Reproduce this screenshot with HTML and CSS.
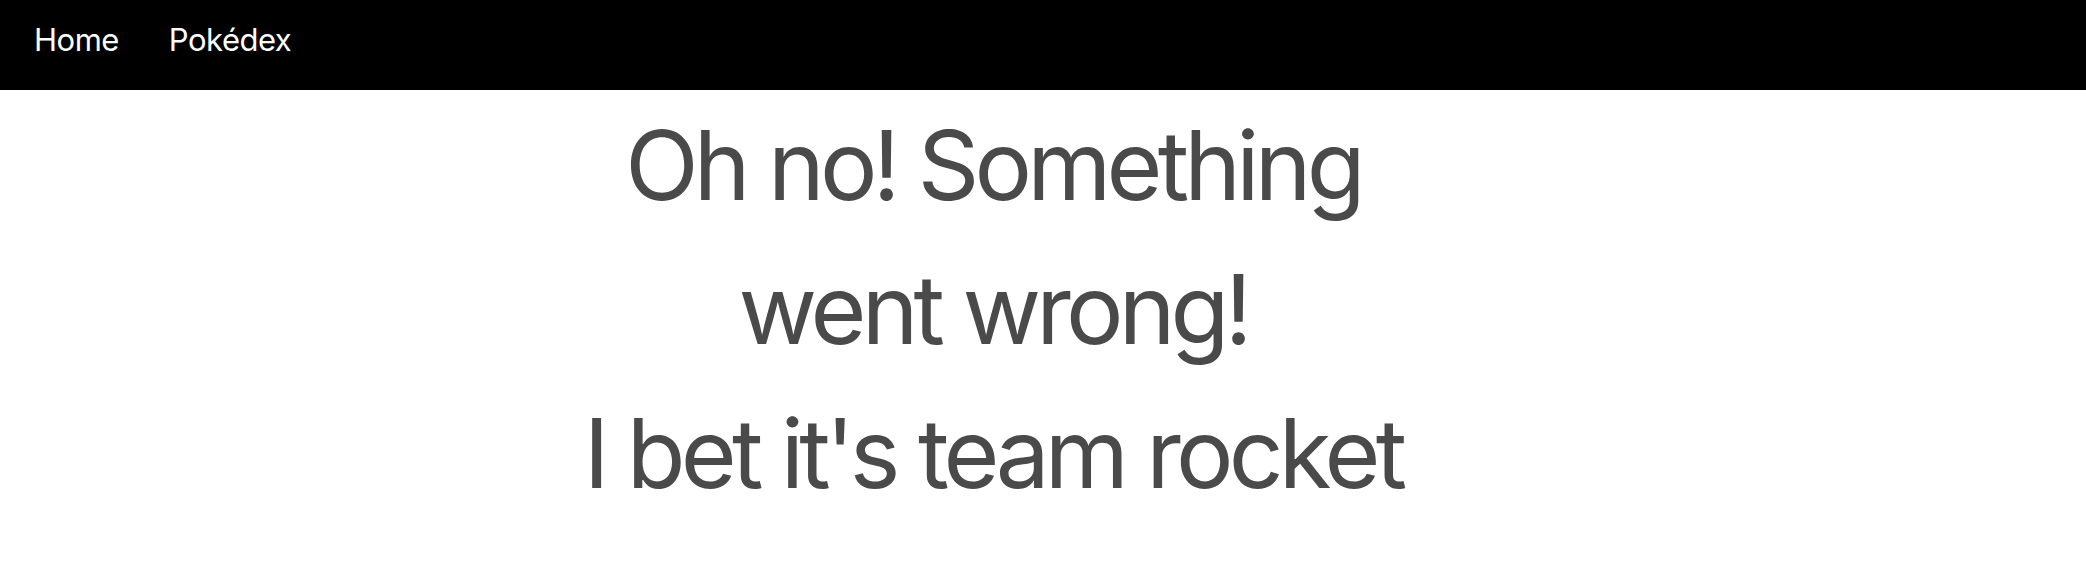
FILE: index.html
```html
<!DOCTYPE html>
<html lang="en">
<head>
<meta charset="utf-8">
<title>Pokédex</title>
<link rel="stylesheet" href="styles.css">
</head>
<body>
<nav class="navbar">
  <a class="nav-item" href="#">Home</a>
  <a class="nav-item" href="#">Pokédex</a>
</nav>
<main class="main">
  <h1 class="error-title">Oh no! Something<br>went wrong!<br>I bet it's team rocket</h1>
</main>
</body>
</html>
```

FILE: styles.css
```css
html, body {
  margin: 0;
  padding: 0;
  background: #ffffff;
  font-family: Inter, "Noto Sans", sans-serif;
}

.navbar {
  height: 90px;
  background: #000000;
  display: flex;
  align-items: center;
  gap: 50px;
  padding: 0 0 12px 34px;
  box-sizing: border-box;
}

.nav-item {
  color: #ffffff;
  text-decoration: none;
  font-size: 31px;
  letter-spacing: -0.5px;
  line-height: 1;
}

.main {
  padding: 3px 100px 0 0;
}

.error-title {
  margin: 0 auto;
  max-width: 900px;
  text-align: center;
  color: #4a4a4a;
  font-size: 96px;
  font-weight: 400;
  line-height: 144px;
  letter-spacing: -4.8px;
}
```
